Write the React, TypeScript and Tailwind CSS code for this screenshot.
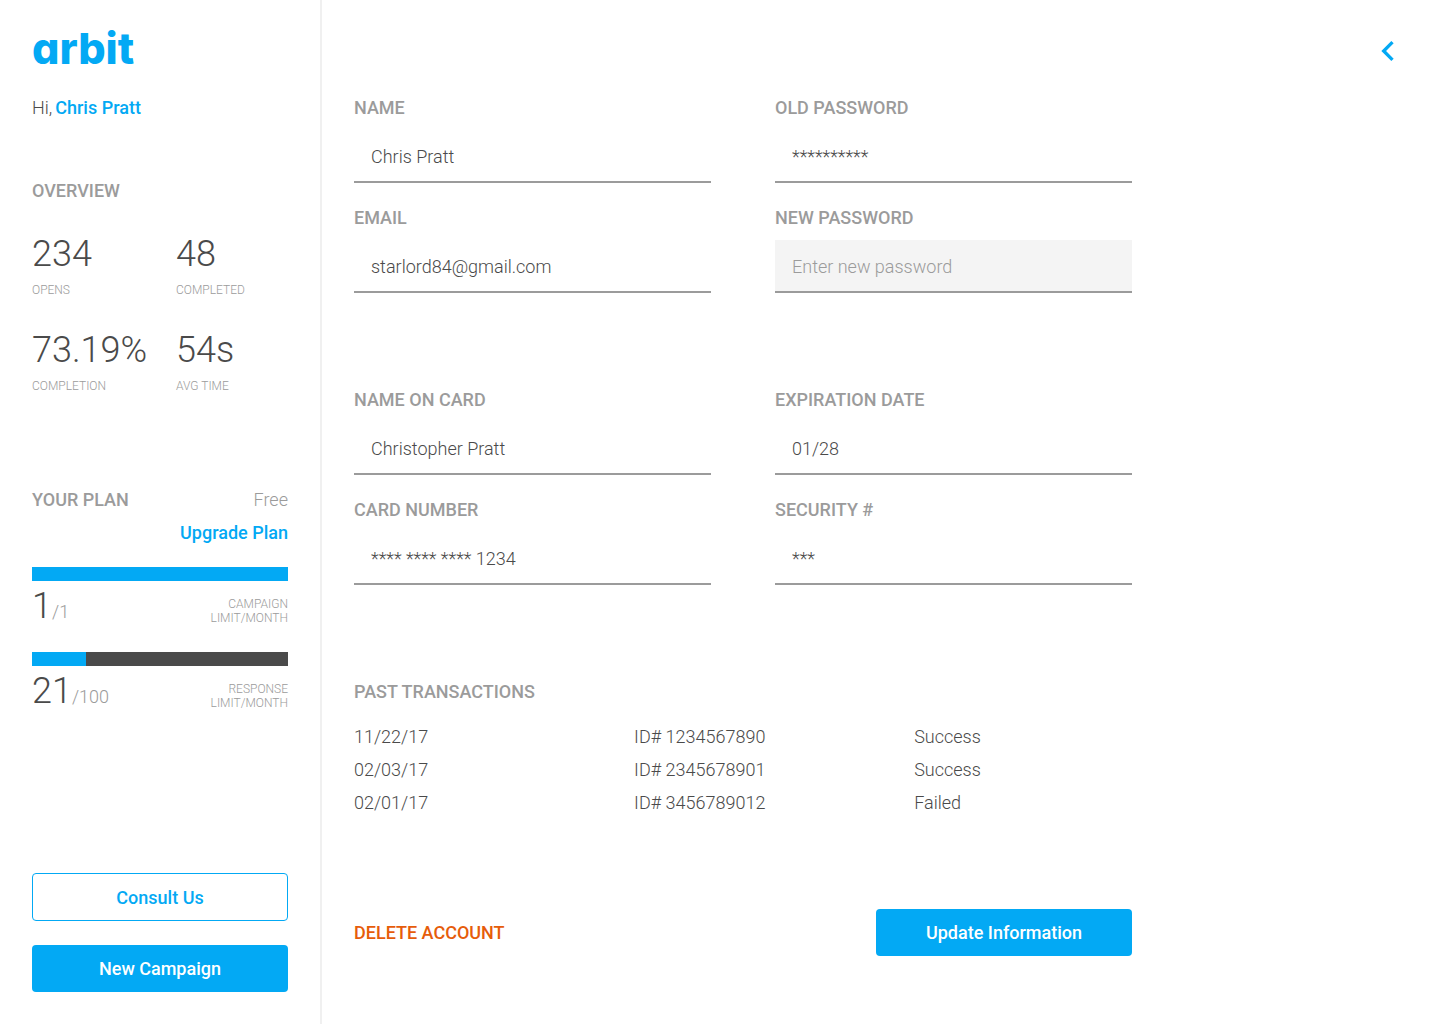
import { MdChevronLeft } from "react-icons/md";

const stats = [
  { value: "234", label: "OPENS" },
  { value: "48", label: "COMPLETED" },
  { value: "73.19%", label: "COMPLETION" },
  { value: "54s", label: "AVG TIME" },
];

const limits = [
  { used: 1, total: 1, label: "CAMPAIGN" },
  { used: 21, total: 100, label: "RESPONSE" },
];

const transactions = [
  { date: "11/22/17", id: "ID# 1234567890", status: "Success" },
  { date: "02/03/17", id: "ID# 2345678901", status: "Success" },
  { date: "02/01/17", id: "ID# 3456789012", status: "Failed" },
];

type FieldProps = {
  id: string;
  label: string;
  value?: string;
  placeholder?: string;
};

function Field({ id, label, value, placeholder }: FieldProps) {
  return (
    <div className="flex flex-col gap-2.5">
      <label htmlFor={id} className="font-medium leading-6 text-[#9b9b9b]">{label}</label>
      <input
        id={id}
        type="text"
        defaultValue={value}
        placeholder={placeholder}
        className="h-[53px] w-full border-b-2 border-[#9b9b9b] px-[17px] pt-0.5 outline-none placeholder:text-[#9b9b9b] placeholder-shown:bg-[#f4f4f4]"
      />
    </div>
  );
}

function Sidebar() {
  return (
    <aside className="flex w-[322px] shrink-0 flex-col border-r-2 border-[#f0f0f0] px-8 pb-8 pt-7">
      <a href="#" className="font-[Inter,sans-serif] text-[43px] font-extrabold leading-10 text-[#03a9f4] [font-feature-settings:'cv11']">arbit</a>
      <p className="mt-7 leading-6">
        Hi,<a href="#" className="ml-[3px] font-medium text-[#03a9f4]">Chris Pratt</a>
      </p>

      {/* Overview */}
      <h2 className="mt-[59px] font-medium leading-6 text-[#9b9b9b]">OVERVIEW</h2>
      <div className="mt-[31px] grid grid-cols-2 gap-8">
        {stats.map((s) => (
          <div key={s.label}>
            <p className="text-4xl leading-10">{s.value}</p>
            <p className="mt-2 text-xs leading-4 text-[#9b9b9b]">{s.label}</p>
          </div>
        ))}
      </div>

      {/* Plan */}
      <section className="mt-[94px]">
        <div className="flex justify-between leading-6 text-[#9b9b9b]">
          <h2 className="font-medium">YOUR PLAN</h2>
          <span>Free</span>
        </div>
        <a href="#" className="mt-[9px] block text-right font-medium leading-6 text-[#03a9f4]">Upgrade Plan</a>
        <div className="mt-[22px] flex flex-col gap-[26px]">
          {limits.map((l) => (
            <div key={l.label}>
              <div className="h-3.5 bg-[#4a4a4a]">
                <div className="h-full bg-[#03a9f4]" style={{ width: `${(l.used / l.total) * 100}%` }} />
              </div>
              <div className="mt-[5px] flex justify-between">
                <p className="text-4xl leading-10">
                  {l.used}
                  <span className="text-lg leading-none text-[#9b9b9b]">/{l.total}</span>
                </p>
                <p className="mt-[11px] text-right text-xs leading-[14px] text-[#9b9b9b]">
                  {l.label}<br />LIMIT/MONTH
                </p>
              </div>
            </div>
          ))}
        </div>
      </section>

      <div className="mt-auto flex flex-col gap-6">
        <button type="button" className="h-12 rounded border border-[#03a9f4] pt-0.5 font-medium text-[#03a9f4]">Consult Us</button>
        <button type="button" className="h-[47px] rounded bg-[#03a9f4] font-medium text-white">New Campaign</button>
      </div>
    </aside>
  );
}

export default function App() {
  return (
    <div className="flex min-h-screen bg-white font-[Roboto,sans-serif] text-lg font-light text-[#4a4a4a]">
      <Sidebar />

      <main className="flex flex-1 items-start justify-between gap-8 px-8 pb-8">
        <form className="w-full max-w-[778px] pt-24">
          <div className="grid grid-cols-2 gap-x-16 gap-y-[23px]">
            <Field id="name" label="NAME" value="Chris Pratt" />
            <Field id="old-password" label="OLD PASSWORD" value="**********" />
            <Field id="email" label="EMAIL" value="starlord84@gmail.com" />
            <Field id="new-password" label="NEW PASSWORD" placeholder="Enter new password" />
          </div>

          {/* Card */}
          <div className="mt-[95px] grid grid-cols-2 gap-x-16 gap-y-[23px]">
            <Field id="card-name" label="NAME ON CARD" value="Christopher Pratt" />
            <Field id="expiration" label="EXPIRATION DATE" value="01/28" />
            <Field id="card-number" label="CARD NUMBER" value="**** **** **** 1234" />
            <Field id="security" label="SECURITY #" value="***" />
          </div>

          {/* Transactions */}
          <h2 id="transactions" className="mt-[95px] font-medium leading-6 text-[#9b9b9b]">PAST TRANSACTIONS</h2>
          <table aria-labelledby="transactions" className="mt-4 w-full table-fixed">
            <tbody>
              {transactions.map((t) => (
                <tr key={t.id} className="h-[33px] leading-6">
                  <td className="w-[36%]">{t.date}</td>
                  <td className="w-[36%]">{t.id}</td>
                  <td>{t.status}</td>
                </tr>
              ))}
            </tbody>
          </table>

          <div className="mt-[90px] flex items-center justify-between">
            <button type="button" className="font-medium text-[#e65c0a]">DELETE ACCOUNT</button>
            <button type="submit" className="h-[47px] w-64 rounded bg-[#03a9f4] font-medium text-white">Update Information</button>
          </div>
        </form>

        <button type="button" aria-label="Back" className="mt-[31px] text-[#03a9f4]">
          <MdChevronLeft className="size-10" />
        </button>
      </main>
    </div>
  );
}
